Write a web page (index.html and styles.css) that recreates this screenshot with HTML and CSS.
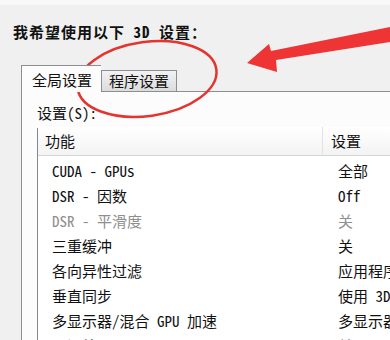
FILE: index.html
```html
<html>
<head>
    <meta charset="utf-8">
    <title>3D 设置</title>
    <link rel="stylesheet" href="styles.css">
</head>

<body>
<div class="window">
    <h1 class="title">我希望使用以下 3D 设置：</h1>

    <div class="tabs">
        <div class="tab active">全局设置</div>
        <div class="tab">程序设置</div>
    </div>

    <div class="panel">
        <div class="label">设置(S):</div>
        <div class="list">
            <div class="list-head">
                <div class="head-feature">功能</div>
                <div class="head-setting">设置</div>
            </div>
            <div class="list-body">
                <div class="row"><span>CUDA - GPUs</span><span>全部</span></div>
                <div class="row"><span>DSR - 因数</span><span>Off</span></div>
                <div class="row disabled"><span>DSR - 平滑度</span><span>关</span></div>
                <div class="row"><span>三重缓冲</span><span>关</span></div>
                <div class="row"><span>各向异性过滤</span><span>应用程序控制的</span></div>
                <div class="row"><span>垂直同步</span><span>使用 3D 应用程序设置</span></div>
                <div class="row"><span>多显示器/混合 GPU 加速</span><span>多显示器性能模式</span></div>
                <div class="row"><span>平滑处理 - FXAA</span><span>关</span></div>
            </div>
        </div>
    </div>

    <!-- red hand-drawn annotation on top of the dialog -->
    <svg class="annotation" width="390" height="340" viewBox="0 0 390 340">
        <ellipse cx="147" cy="79" rx="70" ry="37" transform="rotate(-8 147 79)"
                 fill="none" stroke="#e5332e" stroke-width="2.5"/>
        <polygon points="247,63 269,44 271,51 390,27 390,42 276,60 277,72" fill="#ee3434"/>
    </svg>
</div>
</body>
</html>
```

FILE: styles.css
```css
body {
    margin: 0;
    background-color: #f0f0f0;
    font-family: "Noto Sans Mono CJK SC", "Noto Sans CJK SC", sans-serif;
    font-size: 15px;
    color: #111;
    overflow: hidden;
}

.window {
    position: relative;
    width: 390px;
    height: 340px;
    border-top: 5px solid #f8f8f8;
    box-sizing: border-box;
    overflow: hidden;
}

.title {
    margin: 17px 0 0 13px;
    font-size: 15px;
    line-height: 20px;
    font-weight: bold;
    letter-spacing: 1px;
}

.tabs {
    display: flex;
    align-items: flex-end;
    height: 26px;
    margin: 23px 0 0 21px;
}

.tab {
    height: 21px;
    line-height: 20px;
    padding: 0 7px;
    border: 1px solid #8c8e94;
    border-bottom: none;
    box-sizing: border-box;
    background: linear-gradient(#f2f2f2, #dcdcdc);
}

.tab.active {
    position: relative;
    z-index: 1;
    height: 27px;
    margin-bottom: -1px;
    padding: 2px 9px 0 10px;
    line-height: 24px;
    background: #fcfcfc;
    border-right: none;
}

.panel {
    margin-left: 21px;
    height: 260px;
    border-top: 1px solid #8c8e94;
    border-left: 1px solid #8c8e94;
    background-color: #fcfcfc;
    padding: 12px 0 0 15px;
}

.label {
    line-height: 18px;
}

.list {
    margin-top: 6px;
    border-top: 1px solid #828790;
    border-left: 1px solid #828790;
    background-color: white;
    height: 300px;
}

.list-head {
    display: grid;
    grid-template-columns: 285px auto;
    height: 28px;
    line-height: 28px;
    border-bottom: 1px solid #d5d5d5;
    background: linear-gradient(#ffffff, #f3f3f3);
    margin-top: -2px;
}

.head-feature {
    padding-left: 7px;
    border-right: 1px solid #e2e2e2;
}

.head-setting {
    padding-left: 8px;
    white-space: nowrap;
}

.list-body {
    padding-top: 2px;
}

.row {
    display: grid;
    grid-template-columns: 286px auto;
    padding-left: 14px;
    height: 25px;
    line-height: 25px;
    white-space: nowrap;
}

.row.disabled {
    color: #8f8f8f;
}

.annotation {
    position: absolute;
    top: -5px;
    left: 0;
    pointer-events: none;
}
```
